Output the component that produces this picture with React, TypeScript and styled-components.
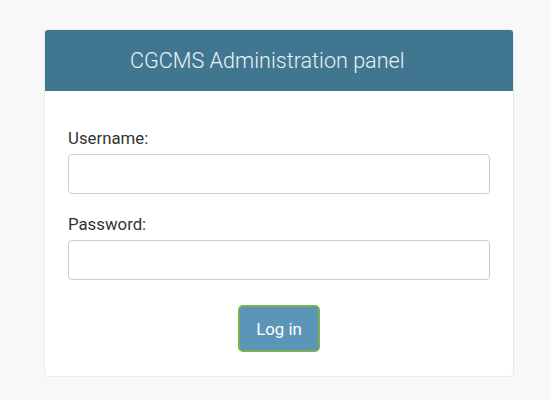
import React from "react";
import styled, { createGlobalStyle } from "styled-components";

const Global = createGlobalStyle`
  html, body { margin: 0; padding: 0; background: #f8f8f8; }
  body { font-family: Roboto, "Liberation Sans", sans-serif; color: #333; }
  * { box-sizing: border-box; }
`;

const Page = styled.div`
  display: flex;
  justify-content: center;
  padding-top: 29px;
  padding-left: 8px;
`;

const Card = styled.div`
  width: 470px;
  background: #fff;
  border: 1px solid #eaeaea;
  border-radius: 4px;
  overflow: hidden;
`;

const Header = styled.div`
  height: 62px;
  margin: -1px -1px 0 -1px;
  background: #417690;
  display: flex;
  align-items: center;
  padding-left: 86px;
`;

const Title = styled.h1`
  margin: 0;
  font-family: Roboto, "Liberation Sans", sans-serif;
  font-weight: 300;
  font-size: 21.6px;
  color: #e8f1f5;
`;

const Form = styled.form`
  padding: 37px 23px 24px 23px;
  display: flex;
  flex-direction: column;
`;

const Field = styled.div`
  display: flex;
  flex-direction: column;
  gap: 6px;
  margin-bottom: 20px;
`;

const Label = styled.label`
  font-size: 16.8px;
  color: #333;
  line-height: 20px;
`;

const Input = styled.input`
  height: 40px;
  width: 100%;
  border: 1px solid #ccc;
  border-radius: 4px;
  background: #fff;
  font-size: 16px;
`;

const Actions = styled.div`
  display: flex;
  justify-content: center;
  padding-top: 5px;
`;

const Button = styled.button`
  width: 82px;
  height: 47px;
  background: #5b96b8;
  color: #fff;
  border: 2px solid #7cae52;
  border-radius: 5px;
  font-family: Roboto, "Liberation Sans", sans-serif;
  font-size: 16.8px;
  cursor: pointer;
`;

export default function App() {
  return (
    <>
      <Global />
      <Page>
        <Card>
          <Header>
            <Title>CGCMS Administration panel</Title>
          </Header>
          <Form onSubmit={(e) => e.preventDefault()}>
            <Field>
              <Label htmlFor="u">Username:</Label>
              <Input id="u" type="text" />
            </Field>
            <Field>
              <Label htmlFor="p">Password:</Label>
              <Input id="p" type="password" />
            </Field>
            <Actions>
              <Button type="submit">Log in</Button>
            </Actions>
          </Form>
        </Card>
      </Page>
    </>
  );
}
